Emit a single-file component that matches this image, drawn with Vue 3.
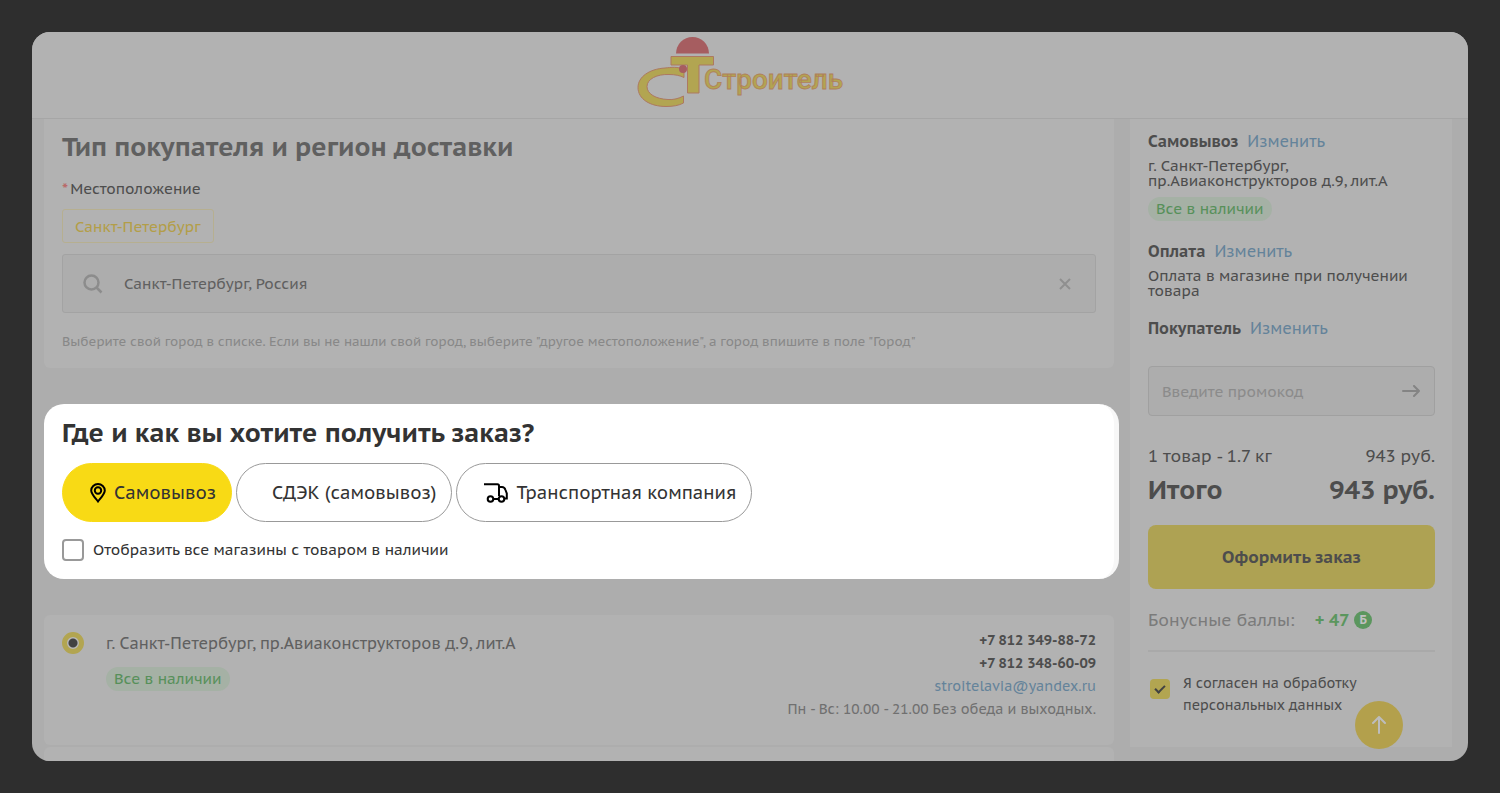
<template>
  <div class="page">
    <div class="window">
      <header class="header">
        <svg class="logo" viewBox="0 0 208 72" width="208" height="72" role="img" aria-label="СТ Строитель">
          <path class="helmet" d="M39 16.500a16.500 16.500 0 0 1 33 0z" />
          <path
            class="mark"
            d="M47 33C41 29 34 30.500 28 31C12 32 1 40 1 50.500C1 62 13 69.500 29 69.500C36 69.500 42 68.500 46.500 66V59C42 61.500 36 63 31 62.500C19 62 10 57 10 49.500C10 42 20 37 32 37.500C38 37.500 43 38.500 47 40.500z"
          />
          <path class="mark" d="M34 19.500H76.500V28H62V56H50.500V28H34z" />
          <circle class="dot" cx="46" cy="32" r="4" />
          <text class="logo-text" x="67" y="52">Строитель</text>
        </svg>
      </header>

      <div class="content">
        <main class="main">
          <section class="card region">
            <h2 class="title muted">Тип покупателя и регион доставки</h2>
            <label class="field-label" for="location"><span class="required">*</span>Местоположение</label>
            <button class="city" type="button" @click="location = 'Санкт-Петербург, Россия'">Санкт-Петербург</button>
            <div class="search">
              <svg width="20" height="20" viewBox="0 0 20 20" fill="none" stroke="#8c8c8c" stroke-width="2.5">
                <circle cx="8.500" cy="8.500" r="7" />
                <path d="M13.500 13.500L18.500 18.500" />
              </svg>
              <input id="location" v-model="location" type="text" />
              <button class="clear" type="button" aria-label="Очистить" @click="location = ''">
                <svg width="12" height="12" viewBox="0 0 12 12" stroke="#8f8f8f" stroke-width="2">
                  <path d="M1 1L11 11M11 1L1 11" />
                </svg>
              </button>
            </div>
            <p class="hint">Выберите свой город в списке. Если вы не нашли свой город, выберите "другое местоположение", а город впишите в поле "Город"</p>
          </section>

          <section class="delivery">
            <h2 class="title">Где и как вы хотите получить заказ?</h2>
            <div class="methods">
              <button
                v-for="m in methods"
                :key="m.id"
                type="button"
                class="method"
                :class="{ active: method === m.id }"
                @click="method = m.id"
              >
                <span class="method-icon">
                  <svg v-if="m.id === 'pickup'" width="16" height="20" viewBox="0 0 16 20" fill="none" stroke="#000" stroke-width="2">
                    <path d="M8 18.500C5 14.500 1.200 11 1.200 7.500a6.800 6.500 0 0 1 13.600 0C14.800 11 11 14.500 8 18.500z" />
                    <circle cx="8" cy="7.500" r="3.200" />
                  </svg>
                  <svg v-if="m.id === 'transport'" width="24" height="20" viewBox="0 0 24 20" fill="none" stroke="#000" stroke-width="2">
                    <path d="M0 1.200H13.500Q15 1.200 15 2.700V13M15 4H18Q20.500 4 21.500 7L22.800 10.500V15.500H20.500M9.500 16H14.500" />
                    <circle cx="6.500" cy="16" r="2.800" />
                    <circle cx="17.500" cy="16" r="2.800" />
                  </svg>
                </span>
                {{ m.name }}
              </button>
            </div>
            <label class="check-row">
              <input v-model="onlyAvailable" type="checkbox" class="check" />
              Отобразить все магазины с товаром в наличии
            </label>
          </section>

          <div class="stores">
            <section class="card store">
              <input id="store-1" v-model="store" type="radio" name="store" value="1" class="radio" />
              <div class="store-info">
                <label class="store-address" for="store-1">г. Санкт-Петербург, пр.Авиаконструкторов д.9, лит.А</label>
                <span class="badge">Все в наличии</span>
              </div>
              <div class="contacts">
                <b>+7 812 349-88-72</b>
                <b>+7 812 348-60-09</b>
                <a href="#">stroitelavia@yandex.ru</a>
                <span>Пн - Вс: 10.00 - 21.00 Без обеда и выходных.</span>
              </div>
            </section>
            <section class="card store"></section>
          </div>
        </main>

        <aside class="sidebar">
          <div class="summary">
            <div class="summary-head"><b>Самовывоз</b><a href="#">Изменить</a></div>
            <p>г. Санкт-Петербург,<br />пр.Авиаконструкторов д.9, лит.А</p>
            <span class="badge">Все в наличии</span>
          </div>
          <div class="summary">
            <div class="summary-head"><b>Оплата</b><a href="#">Изменить</a></div>
            <p>Оплата в магазине при получении товара</p>
          </div>
          <div class="summary">
            <div class="summary-head"><b>Покупатель</b><a href="#">Изменить</a></div>
          </div>

          <div class="promo">
            <input v-model="promo" type="text" placeholder="Введите промокод" aria-label="Введите промокод" />
            <button type="button" aria-label="Применить">
              <svg width="18" height="12" viewBox="0 0 18 12" fill="none" stroke="#848484" stroke-width="2" stroke-linecap="round" stroke-linejoin="round">
                <path d="M1 6H17M12 1L17 6L12 11" />
              </svg>
            </button>
          </div>

          <div class="row"><span>1 товар - 1.7 кг</span><span>943 руб.</span></div>
          <div class="row total"><span>Итого</span><span>943 руб.</span></div>
          <button class="submit" type="button">Оформить заказ</button>

          <div class="bonus">
            <span>Бонусные баллы:</span>
            <b>+ 47 <i>Б</i></b>
          </div>

          <label class="agree">
            <input v-model="agree" type="checkbox" class="check" />
            <span>Я согласен на обработку<br />персональных данных</span>
          </label>
        </aside>
      </div>

      <button class="to-top" type="button" aria-label="Наверх">
        <svg width="14" height="18" viewBox="0 0 14 18" fill="none" stroke="#bdbdbd" stroke-width="2" stroke-linecap="round" stroke-linejoin="round">
          <path d="M7 17V1M1 7L7 1L13 7" />
        </svg>
      </button>
    </div>
  </div>
</template>

<script setup>
import { ref } from 'vue'

const location = ref('Санкт-Петербург, Россия')
const method = ref('pickup')
const onlyAvailable = ref(false)
const store = ref('1')
const promo = ref('')
const agree = ref(true)

const methods = [
  { id: 'pickup', name: 'Самовывоз' },
  { id: 'cdek', name: 'СДЭК (самовывоз)' },
  { id: 'transport', name: 'Транспортная компания' }
]
</script>

<style>
body {
  margin: 0;
  background: #2e2e2e;
}
</style>

<style scoped>
* {
  box-sizing: border-box;
}
.page {
  height: 100vh;
  padding: 32px;
  background: #2e2e2e;
  font-family: "PT Sans Caption", "Noto Sans", sans-serif;
  font-size: 15px;
  color: #4d4d4d;
}
.window {
  position: relative;
  height: 100%;
  display: flex;
  flex-direction: column;
  overflow: hidden;
  border-radius: 18px;
  background: #adadad;
}
button,
input {
  font: inherit;
  color: inherit;
}
button {
  padding: 0;
  border: none;
  background: none;
  cursor: pointer;
}
h2,
p {
  margin: 0;
}
a {
  color: #64839a;
  text-decoration: none;
}
svg {
  display: block;
}

/* header */
.header {
  flex: none;
  height: 87px;
  padding: 5px 18px 0 0;
  display: flex;
  justify-content: center;
  background: #b2b2b2;
  border-bottom: 1px solid #a6a6a6;
}
.helmet,
.dot {
  fill: #a65d60;
}
.mark {
  fill: #b2a551;
  stroke: #ad7961;
  stroke-width: 1;
}
.logo-text {
  font-family: Roboto, sans-serif;
  font-size: 28px;
  font-weight: 500;
  fill: #b2a551;
  stroke: #b0805b;
  stroke-width: 0.8;
}

.content {
  display: flex;
  align-items: flex-start;
  gap: 16px;
  padding: 0 16px 0 12px;
}
.main {
  flex: 1;
  min-width: 0;
}
.card {
  background: #b2b2b2;
  border-radius: 6px;
}
.title {
  font-size: 26px;
  line-height: 34px;
  font-weight: 700;
  color: #333;
}
.title.muted {
  color: #606060;
}

/* region */
.region {
  display: flex;
  flex-direction: column;
  align-items: flex-start;
  padding: 11px 18px 16px;
  border-radius: 0 0 6px 6px;
}
.field-label {
  margin-top: 14px;
  line-height: 22px;
}
.required {
  margin-right: 2px;
  font-weight: 700;
  color: #b96a6a;
}
.city {
  height: 34px;
  margin: 9px 0 11px;
  padding: 0 12px;
  border: 1px solid #b6af90;
  border-radius: 3px;
  color: #b39e48;
}
.search {
  width: 100%;
  height: 59px;
  display: flex;
  align-items: center;
  gap: 20px;
  padding: 0 24px 0 20px;
  border: 1px solid #a3a3a3;
  border-radius: 3px;
  background: #adadad;
}
.search input {
  flex: 1;
  min-width: 0;
  padding: 0;
  border: none;
  outline: none;
  background: none;
  color: #606060;
  text-indent: 1px;
}
.hint {
  margin-top: 19px;
  font-size: 13px;
  line-height: 20px;
  color: #888;
}

/* delivery */
.delivery {
  margin: 36px -5px 36px 0;
  padding: 12px 18px 18px;
  border-right: 5px solid #f7f7f7;
  border-radius: 20px;
  background: #fff;
  color: #333;
}
.methods {
  display: flex;
  gap: 4px;
  margin: 13px 0 17px;
}
.method {
  height: 59px;
  display: flex;
  align-items: center;
  gap: 8px;
  padding: 0 15px 0 27px;
  border: 1px solid #999;
  border-radius: 30px;
  font-size: 18px;
  white-space: nowrap;
}
.method.active {
  border-color: #f8da15;
  background: #f8da15;
}
.check-row {
  display: flex;
  align-items: center;
  gap: 9px;
  line-height: 22px;
}
.check {
  appearance: none;
  flex: none;
  width: 22px;
  height: 22px;
  margin: 0;
  border: 2px solid #999;
  border-radius: 4px;
}

/* stores */
.stores {
  display: grid;
  gap: 2px;
}
.store {
  display: flex;
  min-height: 130px;
  padding: 14px 18px;
}
.radio {
  appearance: none;
  width: 22px;
  height: 22px;
  margin: 3px 22px 0 0;
  border: 5px solid #b2a551;
  border-radius: 50%;
  background: #b8b8b8;
}
.radio:checked {
  background: radial-gradient(circle, #424242 4px, #b8b8b8 5px);
}
.store-info {
  flex: 1;
}
.store-address {
  display: block;
  margin-bottom: 10px;
  font-size: 16px;
  line-height: 28px;
  color: #606060;
}
.badge {
  display: inline-block;
  padding: 0 8px;
  border-radius: 12px;
  background: #a5b1a5;
  color: #57905a;
  line-height: 24px;
}
.contacts {
  display: flex;
  flex-direction: column;
  align-items: flex-end;
  font-size: 14px;
  line-height: 23px;
  color: #707070;
}
.contacts b {
  color: #4d4d4d;
}

/* sidebar */
.sidebar {
  flex: none;
  width: 322px;
  padding: 12px 17px 30px 18px;
  background: #b2b2b2;
}
.summary {
  margin-bottom: 20px;
}
.summary-head {
  display: flex;
  gap: 9px;
  font-size: 16px;
  line-height: 20px;
}
.summary p {
  margin: 7px 0 0;
  line-height: 15px;
}
.summary .badge {
  margin-top: 9px;
}
.promo {
  height: 50px;
  display: flex;
  align-items: center;
  margin: 28px 0;
  padding: 0 14px 0 13px;
  border: 1px solid #a0a0a0;
  border-radius: 4px;
  background: #adadad;
}
.promo input {
  flex: 1;
  min-width: 0;
  padding: 0;
  border: none;
  outline: none;
  background: none;
}
.promo input::placeholder {
  color: #8b8b8b;
  opacity: 1;
}
.row {
  display: flex;
  justify-content: space-between;
  font-size: 17px;
  line-height: 24px;
}
.row.total {
  margin: 4px 0 17px;
  font-size: 26px;
  line-height: 36px;
  font-weight: 700;
}
.submit {
  width: 100%;
  height: 64px;
  border-radius: 8px;
  background: #aea253;
  font-size: 17px;
  font-weight: 700;
}
.bonus {
  display: flex;
  gap: 20px;
  padding: 19px 0 18px;
  border-bottom: 2px solid #a9a9a9;
  font-size: 17px;
  line-height: 24px;
  color: #7b7b7b;
}
.bonus b {
  display: flex;
  align-items: center;
  gap: 5px;
  color: #5b965e;
}
.bonus i {
  width: 18px;
  border-radius: 50%;
  background: #5b965e;
  color: #c0c0c0;
  font-size: 12px;
  font-style: normal;
  line-height: 18px;
  text-align: center;
}
.agree {
  display: flex;
  align-items: flex-start;
  gap: 13px;
  margin-top: 20px;
  padding: 0 0 1px 2px;
  font-size: 14px;
  line-height: 22px;
}
.agree .check {
  display: grid;
  place-items: center;
  width: 20px;
  height: 20px;
  margin-top: 7px;
  border: none;
  background: #b2a551;
}
.agree .check:checked::after {
  content: "";
  width: 4px;
  height: 8px;
  margin-bottom: 3px;
  border: solid #424242;
  border-width: 0 2px 2px 0;
  transform: rotate(45deg);
}
.to-top {
  position: absolute;
  right: 65px;
  bottom: 12px;
  width: 48px;
  height: 48px;
  display: grid;
  place-items: center;
  border-radius: 50%;
  background: #b3a04c;
}
</style>
